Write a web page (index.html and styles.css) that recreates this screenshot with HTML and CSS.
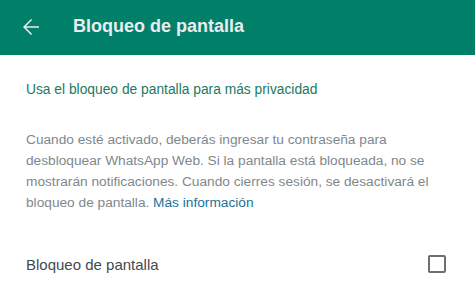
FILE: index.html
```html
<!DOCTYPE html>
<html lang="es">

<head>
  <meta charset="UTF-8">
  <meta name="viewport" content="width=device-width, initial-scale=1.0">
  <title>Bloqueo de pantalla</title>
  <link rel="stylesheet" href="styles.css">
</head>

<body>
  <header class="topbar">
    <button class="back" aria-label="Atrás">
      <svg viewBox="0 0 24 24" width="24" height="24">
        <path d="M12 4l1.1 1.1L6.9 11.2H20v1.6H6.9l6.2 6.1L12 20l-8-8z" fill="currentColor" />
      </svg>
    </button>
    <h1 class="title">Bloqueo de pantalla</h1>
  </header>

  <main class="content">
    <p class="lead">Usa el bloqueo de pantalla para más privacidad</p>
    <p class="desc">Cuando esté activado, deberás ingresar tu contraseña para desbloquear WhatsApp Web. Si la pantalla está
      bloqueada, no se mostrarán notificaciones. Cuando cierres sesión, se desactivará el bloqueo de pantalla.
      <a href="#">Más información</a></p>

    <label class="row">
      <span>Bloqueo de pantalla</span>
      <input type="checkbox" class="check">
    </label>
  </main>
</body>

</html>
```

FILE: styles.css
```css
* {
  margin: 0;
  padding: 0;
  box-sizing: border-box;
}

body {
  font-family: 'Liberation Sans', Arial, sans-serif;
  background: #fff;
}

.topbar {
  height: 55px;
  background: #008069;
  color: #e9edef;
  display: flex;
  align-items: center;
  padding: 0 0 2px 19px;
}

.back {
  width: 24px;
  height: 24px;
  border: 0;
  background: none;
  color: inherit;
  display: flex;
  margin-right: 30px;
}

.title {
  font-size: 18px;
  font-weight: bold;
}

.content {
  padding: 25px 29px 0 26px;
}

.lead {
  font-size: 13.8px;
  line-height: 20px;
  color: #1b7a62;
}

.desc {
  margin-top: 29px;
  font-size: 13.7px;
  line-height: 21px;
  color: #80888c;
}

.desc a {
  color: #16729a;
  text-decoration: none;
}

.row {
  display: flex;
  align-items: center;
  justify-content: space-between;
  margin-top: 42px;
  font-size: 15px;
  color: #3f4a50;
}

.check {
  appearance: none;
  width: 18px;
  height: 18px;
  border: 2px solid #6b6f72;
  border-radius: 2px;
  margin: 0;
}
```
